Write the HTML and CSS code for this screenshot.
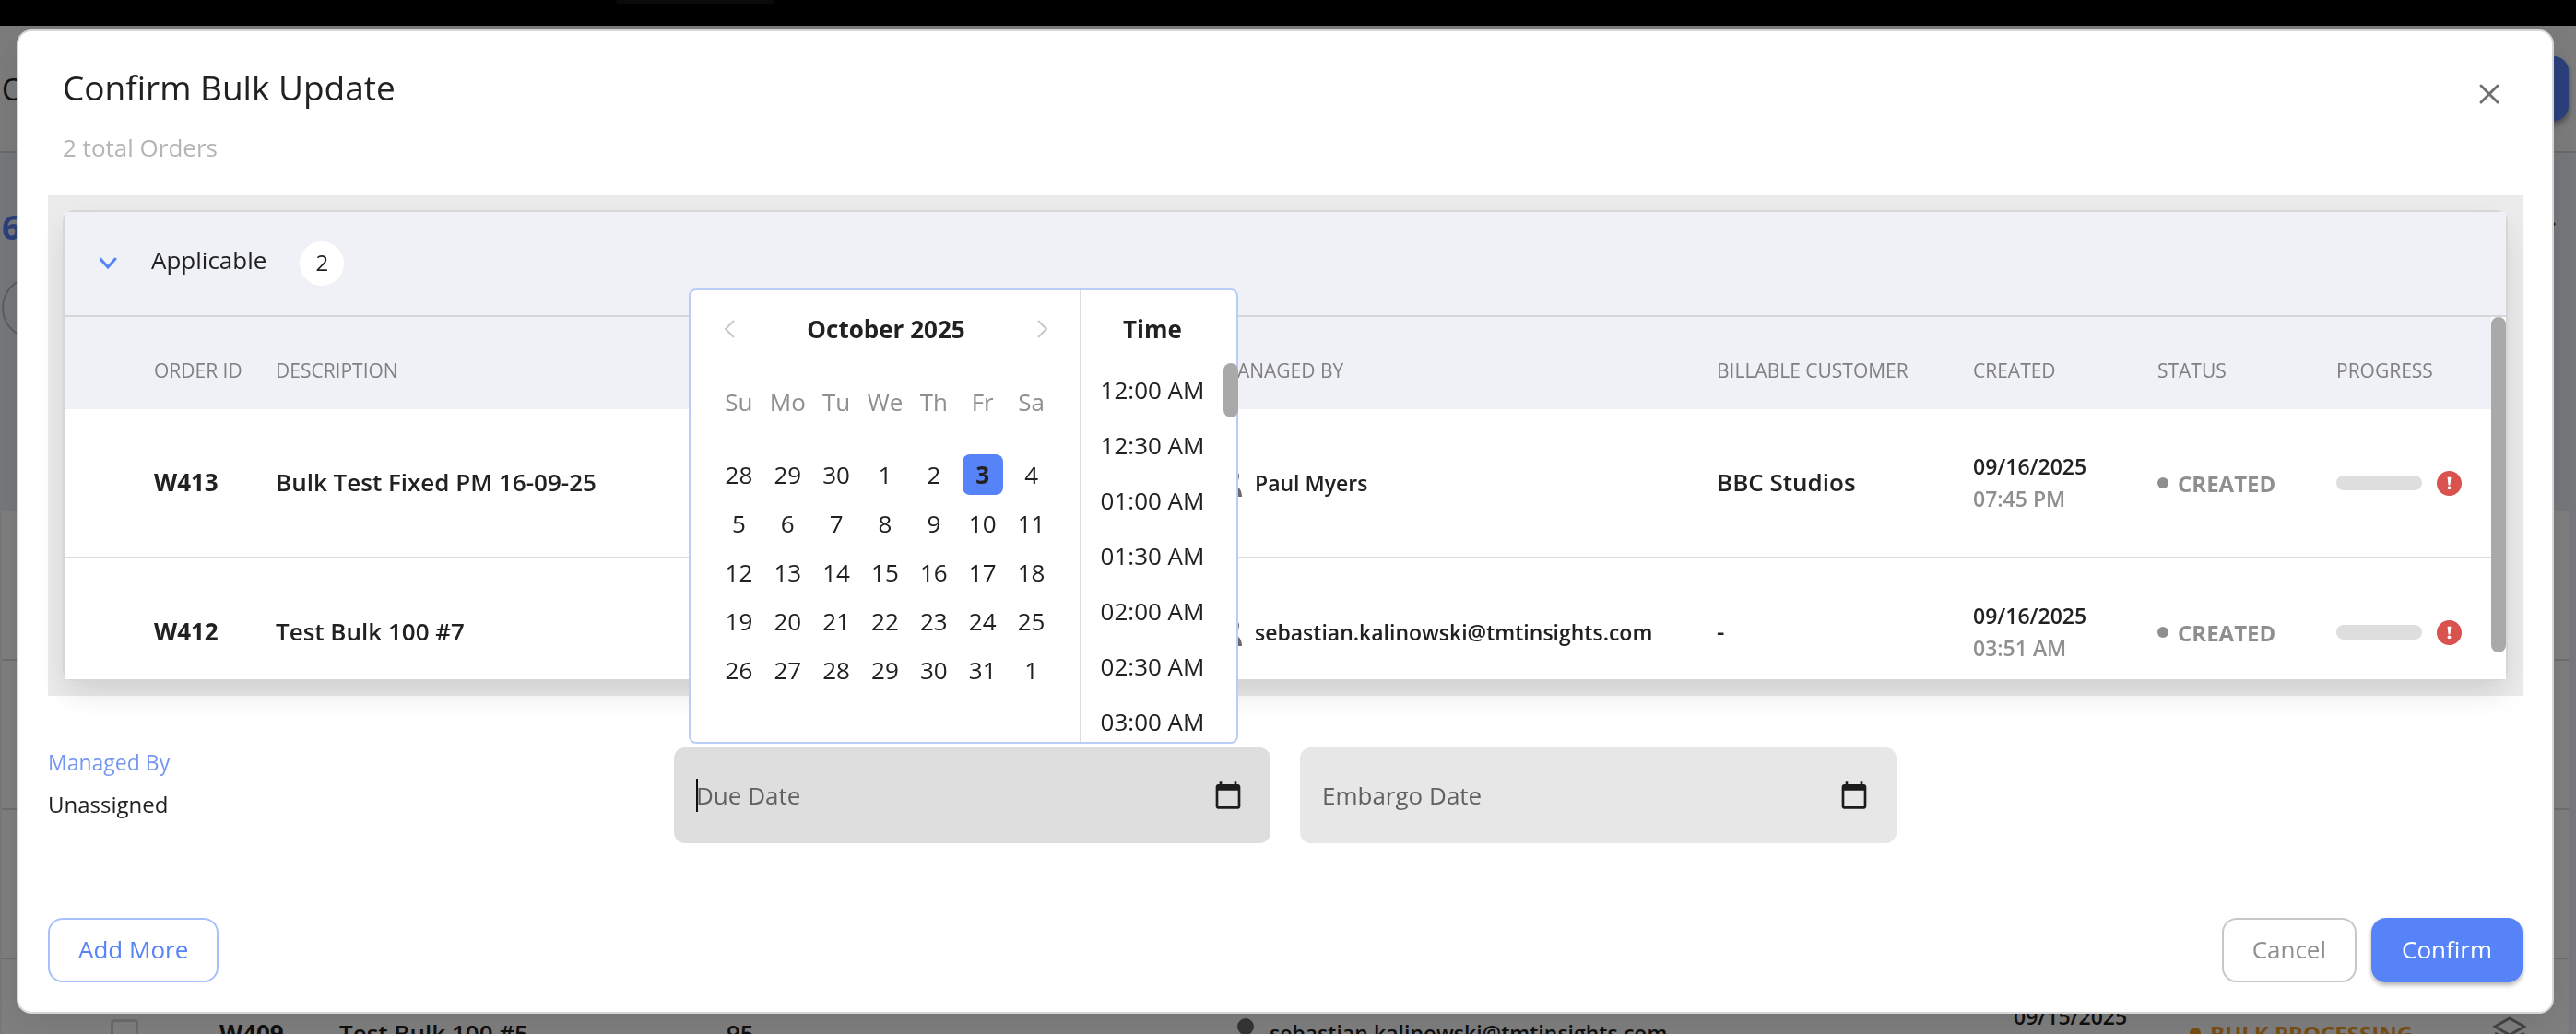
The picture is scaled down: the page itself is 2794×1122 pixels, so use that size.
FILE: index.html
```html
<!DOCTYPE html>
<html lang="en">
<head>
<meta charset="utf-8">
<title>Confirm Bulk Update</title>
<link rel="stylesheet" href="styles.css">
</head>
<body>
<div class="page" aria-hidden="true">
  <div class="topbar"><span class="topbar-tab"></span></div>
  <header class="page-head">
    <span class="page-title">O</span>
    <span class="page-action"></span>
  </header>
  <div class="page-body">
    <div class="toolbar">
      <span class="count">6</span>
      <svg class="toolbar-chevron" viewBox="0 0 20 20"><path d="M3 6l7 8 7-8"/></svg>
    </div>
    <div class="filters"><span class="search-pill"></span></div>
    <div class="list">
      <div class="list-row"></div>
      <div class="list-row"></div>
      <div class="list-row"></div>
      <div class="list-row">
        <span class="box"></span>
        <span class="bg-id">W409</span>
        <span class="bg-desc">Test Bulk 100 #5</span>
        <span class="bg-num">95</span>
        <span class="bg-user"><svg class="person" viewBox="0 0 24 32"><circle cx="12" cy="9" r="9"/><path d="M0 31c0-8 4-11 7-11 3 2 7 2 10 0 3 0 7 3 7 11z"/></svg>sebastian.kalinowski@tmtinsights.com</span>
        <span class="bg-date">09/15/2025</span>
        <span class="bg-status"><i class="dot"></i>BULK PROCESSING</span>
        <svg class="layers" viewBox="0 0 36 36"><path d="M18 2l16 9-16 9-16-9zM2 18l16 9 16-9"/></svg>
      </div>
    </div>
  </div>
</div>

<div class="backdrop">
  <main class="modal" role="dialog" aria-labelledby="dialog-title">
    <header class="modal-head">
      <div>
        <h1 id="dialog-title">Confirm Bulk Update</h1>
        <p class="subtitle">2 total Orders</p>
      </div>
      <button class="close" type="button" aria-label="Close">
        <svg viewBox="0 0 24 24"><path d="M3 3l18 18M21 3L3 21"/></svg>
      </button>
    </header>

    <section class="panel">
      <div class="card">
        <div class="group-head">
          <button class="toggle" type="button" aria-label="Collapse group">
            <svg viewBox="0 0 20 14"><path d="M1 2l8 9 8-9"/></svg>
          </button>
          <span class="group-name">Applicable</span>
          <span class="badge">2</span>
        </div>
        <div class="scroller">
          <table class="orders">
            <colgroup><col class="c-lead"><col class="c-id"><col class="c-desc"><col class="c-user"><col class="c-cust"><col class="c-created"><col class="c-status"><col class="c-progress"></colgroup>
            <thead>
              <tr><td></td><th>ORDER ID</th><th>DESCRIPTION</th><th>MANAGED BY</th><th>BILLABLE CUSTOMER</th><th>CREATED</th><th>STATUS</th><th>PROGRESS</th></tr>
            </thead>
            <tbody>
              <tr>
                <td></td>
                <td class="id">W413</td>
                <td class="main">Bulk Test Fixed PM 16-09-25</td>
                <td><span class="user"><svg class="person" viewBox="0 0 24 32"><circle cx="12" cy="9" r="9"/><path d="M0 31c0-8 4-11 7-11 3 2 7 2 10 0 3 0 7 3 7 11z"/></svg>Paul Myers</span></td>
                <td class="main">BBC Studios</td>
                <td><span class="date">09/16/2025</span><span class="time">07:45 PM</span></td>
                <td><span class="status"><i class="dot"></i>CREATED</span></td>
                <td><span class="progress"><span class="bar"></span><svg class="alert" viewBox="0 0 28 28"><circle cx="14" cy="14" r="14"/><path d="M12 7h4l-1 9h-2z"/><circle class="mark" cx="14" cy="19" r="2"/></svg></span></td>
              </tr>
              <tr>
                <td></td>
                <td class="id">W412</td>
                <td class="main">Test Bulk 100 #7</td>
                <td><span class="user"><svg class="person" viewBox="0 0 24 32"><circle cx="12" cy="9" r="9"/><path d="M0 31c0-8 4-11 7-11 3 2 7 2 10 0 3 0 7 3 7 11z"/></svg>sebastian.kalinowski@tmtinsights.com</span></td>
                <td class="main">-</td>
                <td><span class="date">09/16/2025</span><span class="time">03:51 AM</span></td>
                <td><span class="status"><i class="dot"></i>CREATED</span></td>
                <td><span class="progress"><span class="bar"></span><svg class="alert" viewBox="0 0 28 28"><circle cx="14" cy="14" r="14"/><path d="M12 7h4l-1 9h-2z"/><circle class="mark" cx="14" cy="19" r="2"/></svg></span></td>
              </tr>
            </tbody>
          </table>
          <div class="track"><div class="thumb"></div></div>
        </div>
      </div>
    </section>

    <form class="fields">
      <div class="readonly">
        <span class="readonly-label">Managed By</span>
        <span class="readonly-value">Unassigned</span>
      </div>
      <div class="field focused">
        <i class="caret"></i>
        <input type="text" placeholder="Due Date" aria-label="Due Date">
        <svg class="cal-icon" viewBox="0 0 24 24"><path d="M20 3h-1V1h-2v2H7V1H5v2H4c-1.100 0-2 .9-2 2v16c0 1.100.9 2 2 2h16c1.100 0 2-.9 2-2V5c0-1.100-.9-2-2-2zm0 18H4V8h16v13z"/></svg>
        <div class="picker">
          <div class="month">
            <div class="month-head">
              <button type="button" aria-label="Previous month"><svg viewBox="0 0 12 20"><path d="M11 1L2 10l9 9"/></svg></button>
              <strong>October 2025</strong>
              <button type="button" aria-label="Next month"><svg viewBox="0 0 12 20"><path d="M1 1l9 9-9 9"/></svg></button>
            </div>
            <div class="week names"><span>Su</span><span>Mo</span><span>Tu</span><span>We</span><span>Th</span><span>Fr</span><span>Sa</span></div>
            <div class="week"><button type="button">28</button><button type="button">29</button><button type="button">30</button><button type="button">1</button><button type="button">2</button><button type="button" class="selected">3</button><button type="button">4</button></div>
            <div class="week"><button type="button">5</button><button type="button">6</button><button type="button">7</button><button type="button">8</button><button type="button">9</button><button type="button">10</button><button type="button">11</button></div>
            <div class="week"><button type="button">12</button><button type="button">13</button><button type="button">14</button><button type="button">15</button><button type="button">16</button><button type="button">17</button><button type="button">18</button></div>
            <div class="week"><button type="button">19</button><button type="button">20</button><button type="button">21</button><button type="button">22</button><button type="button">23</button><button type="button">24</button><button type="button">25</button></div>
            <div class="week"><button type="button">26</button><button type="button">27</button><button type="button">28</button><button type="button">29</button><button type="button">30</button><button type="button">31</button><button type="button">1</button></div>
          </div>
          <div class="times">
            <strong class="times-head">Time</strong>
            <ul>
              <li>12:00 AM</li><li>12:30 AM</li><li>01:00 AM</li><li>01:30 AM</li><li>02:00 AM</li><li>02:30 AM</li><li>03:00 AM</li>
            </ul>
            <div class="times-thumb"></div>
          </div>
        </div>
      </div>
      <div class="field">
        <input type="text" placeholder="Embargo Date" aria-label="Embargo Date">
        <svg class="cal-icon" viewBox="0 0 24 24"><path d="M20 3h-1V1h-2v2H7V1H5v2H4c-1.100 0-2 .9-2 2v16c0 1.100.9 2 2 2h16c1.100 0 2-.9 2-2V5c0-1.100-.9-2-2-2zm0 18H4V8h16v13z"/></svg>
      </div>
    </form>

    <footer class="modal-foot">
      <button type="button" class="btn outline">Add More</button>
      <div class="actions">
        <button type="button" class="btn muted">Cancel</button>
        <button type="button" class="btn primary">Confirm</button>
      </div>
    </footer>
  </main>
</div>
</body>
</html>
```
FILE: styles.css
```css
* { box-sizing: border-box; }

body {
  margin: 0;
  font-family: "Open Sans", "Noto Sans", sans-serif;
  font-size: 26px;
  color: #212121;
  overflow: hidden;
  height: 100vh;
}

h1, p, ul { margin: 0; padding: 0; font-weight: 400; }
ul { list-style: none; }
button { font: inherit; color: inherit; border: 0; background: none; padding: 0; }

/* Page behind the dialog */
.page { height: 100vh; overflow: hidden; background: #eff1f6; }
.topbar { height: 28px; background: #000; display: flex; }
.topbar-tab { width: 172px; height: 4px; margin-left: 668px; background: #141414; border-radius: 0 0 16px 16px; }
.page-head {
  height: 138px; display: flex; align-items: center; justify-content: space-between;
  padding: 0 8px 0 2px; background: #f8f8f8; border-bottom: 2px solid #d4d4d4;
}
.page-title { font-size: 32px; }
.page-action { width: 240px; height: 70px; border-radius: 16px; background: #5783f8; box-shadow: 0 4px 6px rgba(0,0,0,.4); }
.toolbar { height: 104px; padding: 56px 20px 0 2px; display: flex; justify-content: space-between; align-items: center; }
.count { font-size: 36px; font-weight: 700; color: #5783f8; }
.toolbar-chevron { width: 20px; height: 20px; fill: none; stroke: #444; stroke-width: 3; }
.filters { height: 285px; padding: 30px 24px 0 2px; }
.search-pill { display: block; height: 68px; border: 2px solid #bbb; border-radius: 34px; }
.list { margin: 0 8px 0 2px; background: #fff; }
.list-row {
  height: 162px; display: grid; align-items: center; border-bottom: 2px solid #dcdcdc; padding-left: 118px;
  grid-template-columns: 118px 130px 420px 551px 845px 191px 329px 1fr;
}
.box { width: 30px; height: 30px; border: 3px solid #d8d8d8; border-radius: 4px; }
.bg-id { font-weight: 700; }
.bg-desc, .bg-num { font-weight: 600; }
.bg-user { display: flex; align-items: center; gap: 14px; font-size: 23px; font-weight: 600; }
.bg-date { font-size: 23px; font-weight: 600; padding-bottom: 36px; }
.bg-status { display: flex; align-items: center; gap: 10px; font-size: 24px; font-weight: 700; color: #f59e2e; }
.layers { width: 36px; height: 36px; fill: none; stroke: #888; stroke-width: 3; }

/* Dialog */
.backdrop {
  position: fixed; inset: 0; background: rgba(0,0,0,.5);
  display: flex; align-items: stretch; padding: 32px 24px 22px 18px;
}
.modal {
  flex: 1; display: flex; flex-direction: column; background: #fff;
  border: 2px solid #d6d6d6; border-radius: 16px; padding: 32px; box-shadow: 0 8px 40px rgba(0,0,0,.1);
}
.modal-head { display: flex; justify-content: space-between; align-items: flex-start; padding: 0 24px 0 16px; height: 146px; }
h1 { font-size: 37px; line-height: 58px; }
.subtitle { font-size: 26px; line-height: 36px; margin-top: 18px; color: #b5b5b5; }
.close { width: 24px; height: 24px; margin-top: 24px; }
.close svg { display: block; fill: none; stroke: #707070; stroke-width: 3; stroke-linecap: round; }

.panel { background: #ebebeb; padding: 16px; }
.card { border: 2px solid #d6d6d6; border-radius: 12px; box-shadow: 0 16px 32px -4px rgba(0,0,0,.12); }
.group-head { height: 114px; display: flex; align-items: center; padding-left: 38px; background: #eff1f6; border-bottom: 2px solid #d4d6d8; }
.toggle { width: 20px; height: 14px; }
.toggle svg { display: block; fill: none; stroke: #5783f8; stroke-width: 3; stroke-linecap: round; }
.group-name { margin: 0 36px 8px; font-size: 26px; }
.badge { width: 48px; height: 48px; border-radius: 50%; background: #fff; font-size: 24px; line-height: 46px; text-align: center; }

.scroller { display: flex; height: 393px; overflow: hidden; background: #fff; }
.orders { flex: 1; height: 424px; border-collapse: separate; border-spacing: 0; table-layout: fixed; }
.c-lead { width: 97px; }
.c-id { width: 132px; }
.c-desc { width: auto; }
.c-user { width: 539px; }
.c-cust { width: 278px; }
.c-created { width: 200px; }
.c-status { width: 194px; }
.c-progress { width: 168px; }
.orders th, .orders td { padding: 0; text-align: left; white-space: nowrap; font-weight: 600; }
.orders thead th, .orders thead td { height: 100px; padding-top: 16px; background: #eff1f6; font-size: 21px; font-weight: 500; color: #808080; }
.orders tbody td { height: 162px; border-bottom: 2px solid #dcdcdc; }
.orders tbody .id { padding-bottom: 2px; font-weight: 700; }
.orders tbody .main { padding-bottom: 2px; }
.user { display: flex; align-items: center; gap: 14px; font-size: 23px; }
.person { width: 24px; height: 32px; fill: #6b6b6b; }
.date, .time { display: block; font-size: 23px; line-height: 35px; }
.time { color: #8f8f8f; }
.status { display: flex; align-items: center; gap: 10px; font-size: 24px; font-weight: 700; color: #8f8f8f; }
.dot { width: 12px; height: 12px; border-radius: 50%; background: currentColor; }
.progress { display: flex; align-items: center; gap: 16px; }
.bar { width: 93px; height: 16px; border-radius: 8px; background: #dedede; }
.alert { width: 27px; height: 27px; fill: #d9524d; }
.alert path, .alert .mark { fill: #fff; }
.track { width: 16px; background: #fff; }
.thumb { height: 364px; border-radius: 8px; background: #a9a9a9; }

/* Form fields */
.fields { display: grid; grid-template-columns: repeat(4, 1fr); gap: 32px; margin-top: 56px; }
.readonly { display: flex; flex-direction: column; gap: 12px; line-height: 33px; }
.readonly-label { font-size: 23px; color: #7697ef; }
.readonly-value { font-size: 24px; }
.field { position: relative; display: flex; align-items: center; height: 104px; padding: 0 30px 0 24px; border-radius: 12px; background: #e7e7e7; }
.focused { background: #dedede; }
.field input { flex: 1; min-width: 0; border: 0; padding: 0; background: none; font: inherit; outline: 0; }
.field input::placeholder { color: #616161; opacity: 1; }
.caret { position: absolute; left: 24px; top: 34px; width: 2px; height: 36px; background: #111; }
.cal-icon { width: 32px; height: 32px; fill: #1c1c1c; }

/* Date and time picker */
.picker {
  position: absolute; left: 16px; bottom: calc(100% + 4px); width: 596px; height: 494px;
  display: flex; background: #fff; border: 2px solid #b9cdf8; border-radius: 8px;
}
.month { flex: 1; padding: 14px 26px 0; border-right: 2px solid #dedede; }
.month-head { display: flex; align-items: center; justify-content: space-between; height: 56px; padding: 0 8px 0 10px; }
.month-head svg { display: block; width: 12px; height: 20px; fill: none; stroke: #c8c8c8; stroke-width: 2; }
.week { display: grid; grid-template-columns: repeat(7, 1fr); justify-items: center; align-items: center; height: 53px; }
.week button { width: 44px; height: 44px; border-radius: 8px; }
.names { height: 103px; padding-bottom: 2px; color: #8f8f8f; }
.week .selected { background: #5783f8; font-weight: 700; }
.times { position: relative; width: 168px; overflow: visible; }
.times-head { display: block; height: 79px; padding: 24px 14px 0 0; line-height: 36px; text-align: center; }
.times ul { height: 411px; overflow: hidden; }
.times li { height: 60px; line-height: 58px; padding-right: 14px; text-align: center; }
.times-thumb { position: absolute; right: -2px; top: 79px; width: 16px; height: 59px; border-radius: 8px; background: #a9a9a9; }

/* Dialog buttons */
.modal-foot { display: flex; justify-content: space-between; margin-top: auto; }
.actions { display: flex; gap: 16px; }
.btn { height: 70px; padding: 0 31px 2px; border: 2px solid; border-radius: 16px; }
.outline { border-color: #a8c0fb; color: #5783f8; }
.muted { border-color: #c8c8c8; color: #8f8f8f; }
.primary { border-color: #5783f8; background: #5783f8; color: #fff; box-shadow: 0 3px 5px rgba(0,0,0,.3); }
```
